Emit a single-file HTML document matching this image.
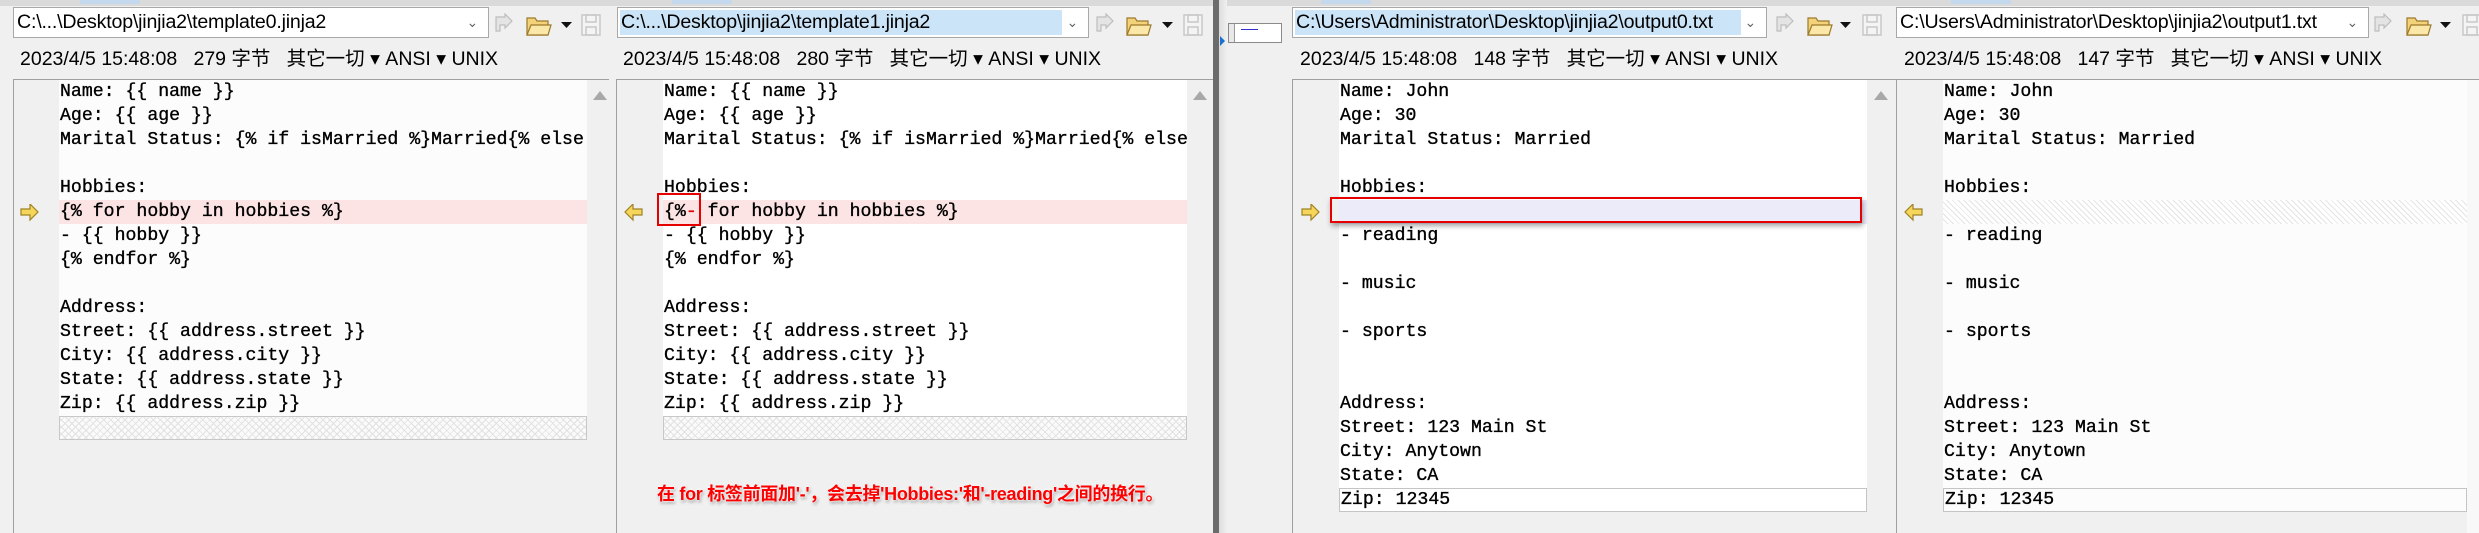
<!DOCTYPE html>
<html><head><meta charset="utf-8">
<style>
*{margin:0;padding:0;box-sizing:border-box}
body{width:2479px;height:533px;background:#f0f0f0;position:relative;overflow:hidden;font-family:"Liberation Sans","Noto Sans CJK SC",sans-serif}
.a{position:absolute}
.combo{position:absolute;top:7px;height:31px;background:#fff;border:1px solid #a8a8a8;font-size:19.6px;line-height:29px;padding-left:3px;white-space:nowrap;color:#000;letter-spacing:-0.2px}
.combo .hl{position:absolute;left:2px;top:2px;bottom:2px;background:#cce4f7}
.combo span{position:relative}
.combo .dd{position:absolute;right:10px;top:0;color:#666;font-size:14px}
.info{position:absolute;top:46px;font-size:19.5px;line-height:26px;white-space:pre;color:#000}
.gut{position:absolute;top:79px;bottom:0;border-left:1px solid #a0a0a0;border-top:1px solid #a0a0a0;background:#f0f0f0}
.code{position:absolute;top:80px;background:#fcfcfc;font-family:"Liberation Mono",monospace;font-size:18.2px;color:#000;overflow:hidden;-webkit-text-stroke:0.35px #000}
.code div{height:24px;line-height:24px;white-space:pre;padding-left:1px}
.hatch{background:repeating-linear-gradient(45deg,#fff 0 3px,#e4e4e4 3px 4px),#fff;}
.xhatch{background:repeating-linear-gradient(45deg,transparent 0 4px,#e2e2e2 4px 5px),repeating-linear-gradient(-45deg,#fafafa 0 4px,#e2e2e2 4px 5px);border:1px solid #c8c8c8}
.tri{position:absolute;width:0;height:0;border-left:7px solid transparent;border-right:7px solid transparent;border-bottom:9px solid #a8a8a8}
</style></head><body>
<div class="a" style="left:0;top:0;width:2479px;height:6px;background:#dadada"></div>
<div class="a" style="left:80px;top:0;width:60px;height:4px;background:#c4d8ee"></div>
<div class="a" style="left:672px;top:0;width:60px;height:4px;background:#c4d8ee"></div>
<div class="a" style="left:1321px;top:0;width:50px;height:4px;background:#c4d8ee"></div>
<div class="a" style="left:1951px;top:0;width:60px;height:4px;background:#c4d8ee"></div>

<svg width="0" height="0" style="position:absolute">
<defs>
<g id="redo"><path d="M2 4h9l0-3 7 7-7 7 0-3H6v6H2z" fill="#e4e4e4" stroke="#bdbdbd" stroke-width="1.2"/></g>
<g id="fold"><path d="M1 5h8l2 3h11v14H1z" fill="#f3d27a" stroke="#9b7a2a" stroke-width="1.2"/><path d="M1 22l4-10h20l-3 10z" fill="#fbe7a8" stroke="#9b7a2a" stroke-width="1.2"/></g>
<g id="save"><rect x="1" y="1" width="18" height="20" fill="#f4f4f4" stroke="#c8c8c8" stroke-width="1.5"/><rect x="5" y="1" width="10" height="7" fill="none" stroke="#c8c8c8" stroke-width="1.5"/><rect x="5" y="13" width="10" height="8" fill="none" stroke="#c8c8c8" stroke-width="1.5"/></g>
<g id="ar"><path d="M1 5h9V0l8 8-8 8v-5H1z" fill="#f6d65a" stroke="#9e8226" stroke-width="1.2"/></g>
<g id="al"><path d="M18 5H9V0L1 8l8 8v-5h9z" fill="#f6d65a" stroke="#9e8226" stroke-width="1.2"/></g>
</defs></svg>

<!-- PANEL 1 -->
<div class="combo" style="left:13px;width:476px"><span>C:\...\Desktop\jinjia2\template0.jinja2</span><span class="dd">&#8964;</span></div>
<svg class="a" style="left:494px;top:13px" width="110" height="26"><use href="#redo"/><g transform="translate(32,0)"><use href="#fold"/></g><path d="M67 9h11l-5.5 6z" fill="#111"/><g transform="translate(87,1)"><use href="#save"/></g></svg>
<div class="info" style="left:20px">2023/4/5 15:48:08   279 字节   其它一切 ▾ ANSI ▾ UNIX</div>
<div class="gut" style="left:13px;width:596px"></div>
<div class="code" style="left:59px;width:528px;height:336px">
<div>Name: {{ name }}</div><div>Age: {{ age }}</div><div>Marital Status: {% if isMarried %}Married{% else %}</div><div></div><div>Hobbies:</div>
<div style="background:#fde4e4">{% for hobby in hobbies %}</div><div>- {{ hobby }}</div><div>{% endfor %}</div><div></div>
<div>Address:</div><div>Street: {{ address.street }}</div><div>City: {{ address.city }}</div><div>State: {{ address.state }}</div><div>Zip: {{ address.zip }}</div>
</div>
<div class="a xhatch" style="left:59px;top:416px;width:528px;height:24px"></div>
<div class="tri" style="left:593px;top:91px"></div>
<svg class="a" style="left:20px;top:204px" width="20" height="18"><use href="#ar"/></svg>

<!-- PANEL 2 -->
<div class="combo" style="left:617px;width:472px"><span class="hl" style="width:442px"></span><span>C:\...\Desktop\jinjia2\template1.jinja2</span><span class="dd">&#8964;</span></div>
<svg class="a" style="left:1095px;top:13px" width="115" height="26"><use href="#redo"/><g transform="translate(31,0)"><use href="#fold"/></g><path d="M67 9h11l-5.5 6z" fill="#111"/><g transform="translate(88,1)"><use href="#save"/></g></svg>
<div class="info" style="left:623px">2023/4/5 15:48:08   280 字节   其它一切 ▾ ANSI ▾ UNIX</div>
<div class="gut" style="left:616px;width:597px"></div>
<div class="code" style="left:663px;width:524px;height:336px;background:#fff">
<div>Name: {{ name }}</div><div>Age: {{ age }}</div><div>Marital Status: {% if isMarried %}Married{% else %}</div><div></div><div>Hobbies:</div>
<div style="background:#fde4e4">{%<span style="color:#e00000;-webkit-text-stroke:0.35px #e00000">-</span> for hobby in hobbies %}</div><div>- {{ hobby }}</div><div>{% endfor %}</div><div></div>
<div>Address:</div><div>Street: {{ address.street }}</div><div>City: {{ address.city }}</div><div>State: {{ address.state }}</div><div>Zip: {{ address.zip }}</div>
</div>
<div class="a xhatch" style="left:663px;top:416px;width:524px;height:24px"></div>
<div class="a" style="left:657px;top:193px;width:44px;height:33px;border:2px solid #e60000"></div>
<div class="tri" style="left:1193px;top:91px"></div>
<svg class="a" style="left:624px;top:204px" width="20" height="18"><use href="#al"/></svg>
<div class="a" style="left:657px;top:480px;font-size:18px;font-weight:bold;color:#f00;white-space:nowrap;letter-spacing:-0.3px;text-shadow:0 0 2px #fff,0 0 3px #fff,1px 2px 3px #888">在 for 标签前面加'-'，会去掉'Hobbies:'和'-reading'之间的换行。</div>

<div class="a" style="left:1213px;top:0;width:6px;height:533px;background:#6b6b6b"></div>
<div class="a" style="left:1219px;top:0;width:8px;height:533px;background:linear-gradient(90deg,#dcdcdc,#f0f0f0)"></div>

<!-- PANEL 3 -->
<div class="a" style="left:1228px;top:23px;width:54px;height:20px;border:1px solid #8a8a8a;background:#fff"><div style="position:absolute;left:0;top:0;width:6px;height:18px;background:#e8e8e8;border-right:1px solid #999"></div><div style="position:absolute;left:12px;top:5px;width:17px;height:1px;background:#3030d0"></div></div>
<div class="a" style="left:1220px;top:36px;width:0;height:0;border-top:5px solid transparent;border-bottom:5px solid transparent;border-left:5px solid #1a6fd0"></div>
<div class="combo" style="left:1292px;width:475px"><span class="hl" style="width:446px"></span><span>C:\Users\Administrator\Desktop\jinjia2\output0.txt</span><span class="dd">&#8964;</span></div>
<svg class="a" style="left:1775px;top:13px" width="115" height="26"><use href="#redo"/><g transform="translate(32,0)"><use href="#fold"/></g><path d="M65 9h11l-5.5 6z" fill="#111"/><g transform="translate(87,1)"><use href="#save"/></g></svg>
<div class="info" style="left:1300px">2023/4/5 15:48:08   148 字节   其它一切 ▾ ANSI ▾ UNIX</div>
<div class="gut" style="left:1292px;width:604px"></div>
<div class="code" style="left:1339px;width:528px;height:432px;background:#fff">
<div>Name: John</div><div>Age: 30</div><div>Marital Status: Married</div><div></div><div>Hobbies:</div>
<div style="background:#ebebfa"></div><div>- reading</div><div></div><div>- music</div><div></div><div>- sports</div><div></div><div></div>
<div>Address:</div><div>Street: 123 Main St</div><div>City: Anytown</div><div>State: CA</div><div style="border:1px solid #c4c4c4;line-height:22px">Zip: 12345</div>
</div>
<div class="a" style="left:1330px;top:197px;width:532px;height:26px;border:2px solid #e60000;box-shadow:1px 3px 5px rgba(0,0,0,.35)"></div>
<div class="tri" style="left:1874px;top:91px"></div>
<svg class="a" style="left:1301px;top:204px" width="20" height="18"><use href="#ar"/></svg>

<!-- PANEL 4 -->
<div class="combo" style="left:1896px;width:473px"><span>C:\Users\Administrator\Desktop\jinjia2\output1.txt</span><span class="dd">&#8964;</span></div>
<svg class="a" style="left:2373px;top:13px" width="110" height="26"><use href="#redo"/><g transform="translate(33,0)"><use href="#fold"/></g><path d="M67 9h11l-5.5 6z" fill="#111"/><g transform="translate(89,1)"><use href="#save"/></g></svg>
<div class="info" style="left:1904px">2023/4/5 15:48:08   147 字节   其它一切 ▾ ANSI ▾ UNIX</div>
<div class="gut" style="left:1896px;width:590px"></div>
<div class="code" style="left:1943px;width:524px;height:432px">
<div>Name: John</div><div>Age: 30</div><div>Marital Status: Married</div><div></div><div>Hobbies:</div>
<div class="hatch"></div><div>- reading</div><div></div><div>- music</div><div></div><div>- sports</div><div></div><div></div>
<div>Address:</div><div>Street: 123 Main St</div><div>City: Anytown</div><div>State: CA</div><div style="border:1px solid #c4c4c4;line-height:22px">Zip: 12345</div>
</div>
<svg class="a" style="left:1904px;top:204px" width="20" height="18"><use href="#al"/></svg>
<div class="a" style="left:2467px;top:80px;width:12px;height:453px;background:#f8f8f8"></div>
</body></html>
